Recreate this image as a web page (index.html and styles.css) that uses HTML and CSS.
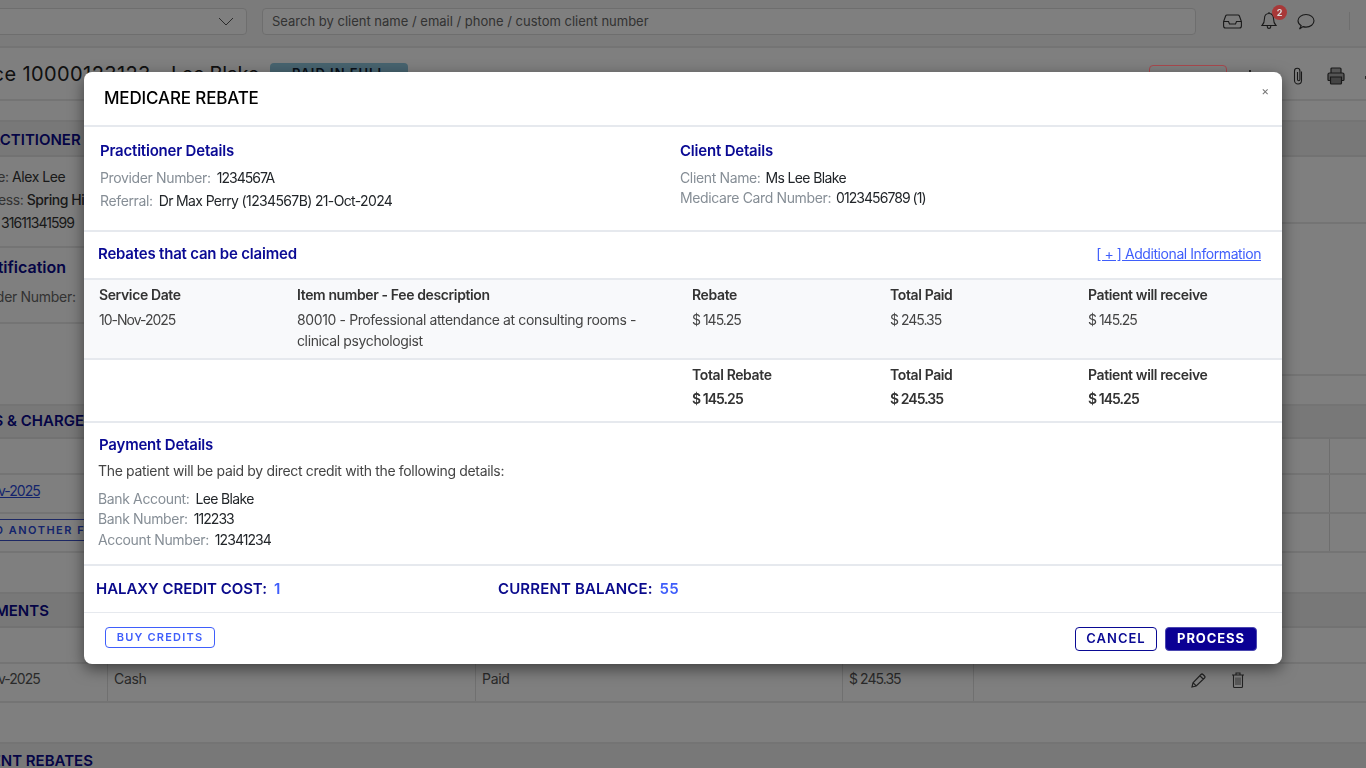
FILE: index.html
```html
<!DOCTYPE html>
<html lang="en">
<head>
<meta charset="utf-8">
<title>Medicare Rebate</title>
<link rel="stylesheet" href="styles.css">
</head>
<body>
<div class="page">
  <header class="topbar">
    <div class="select"><svg class="chev" width="16" height="9" viewBox="0 0 16 9"><path d="M1 1l7 7 7-7" fill="none" stroke="#555" stroke-width="1"/></svg></div>
    <div class="search">Search by client name / email / phone / custom client number</div>
    <div class="top-icons">
      <svg width="19" height="15" viewBox="0 0 19 15"><path d="M4 1h11q1 0 1.400 1l2 5.500V12q0 2-2 2H2.600q-2 0-2-2V7.500l2-5.500Q3 1 4 1zM.8 7.500h4.700l1 2.500h6l1-2.500h4.700" fill="none" stroke="#333" stroke-width="1.100"/></svg>
      <span class="bell"><svg width="16" height="20" viewBox="0 0 16 20"><path d="M8 1v1.500M8 2.500c-3 0-4.500 2-4.500 5 0 3.500-1 5.500-2.500 7h14c-1.500-1.500-2.500-3.500-2.500-7 0-3-1.500-5-4.500-5zM6.300 14.500v1.200a1.700 1.700 0 0 0 3.400 0v-1.200" fill="none" stroke="#333" stroke-width="1.100"/></svg><b class="count">2</b></span>
      <svg width="18" height="17" viewBox="0 0 18 17"><path d="M2.500 16l1.700-3.300C2.300 11.500 1 9.800 1 7.800 1 4.300 4.500 1.500 9 1.500s8 2.800 8 6.300-3.500 6.300-8 6.300c-1 0-2-.2-3-.5z" fill="none" stroke="#333" stroke-width="1.100"/></svg>
      <i class="divider"></i>
    </div>
  </header>
  <section class="title-row">
    <h1>Invoice 10000123123 <span class="who">- Lee Blake</span></h1>
    <span class="paid">PAID IN FULL</span>
    <span class="grow"></span>
    <span class="refund"></span>
    <i class="tick"></i>
    <svg class="clip" width="10" height="18" viewBox="0 0 10 18"><path d="M8.500 4.500v9a3.500 3.500 0 0 1-7 0V4a2.700 2.700 0 0 1 5.400 0v8.500a1.200 1.200 0 0 1-2.400 0V5" fill="none" stroke="#333" stroke-width="1.100"/></svg>
    <svg class="printer" width="18" height="18" viewBox="0 0 18 18"><path d="M4 6V2q0-1 1-1h8q1 0 1 1v4M3.500 13.500H2q-1 0-1-1V7.500Q1 6 2.500 6h13Q17 6 17 7.500v5q0 1-1 1h-1.500" fill="#aaa" stroke="#333" stroke-width="1.200"/><path d="M3.500 10h11v6q0 1-1 1h-9q-1 0-1-1z" fill="#888" stroke="#333" stroke-width="1.200"/></svg>
    <i class="tick edge"></i>
  </section>
  <div class="strip"></div>
  <h2 class="band band-prac">PRACTITIONER DETAILS</h2>
  <div class="two">
    <div class="two-left">
      <section class="prac">
        <p><span class="dim">Name:</span> Alex Lee</p>
        <p><span class="dim">Address:</span> <b class="m">Spring Hill</b></p>
        <p class="abn"><span class="dim">ABN:</span> <span class="num">31611341599</span></p>
      </section>
      <section class="cert">
        <h3>Identification</h3>
        <p class="dim">Provider Number:</p>
      </section>
      <div class="fill"></div>
    </div>
    <div class="two-right">
      <div class="r1"></div>
      <div class="r2"></div>
      <div class="fill"></div>
    </div>
  </div>
  <h2 class="band band-svc">SERVICES &amp; CHARGES</h2>
  <div class="trow thead"><span></span><span></span></div>
  <div class="trow tall"><a class="num" href="#">10-Nov-2025</a><span></span></div>
  <div class="add-row"><span class="add">ADD ANOTHER FEE</span><span></span></div>
  <div class="gap"></div>
  <h2 class="band band-pay">PAYMENTS</h2>
  <div class="pay-head"></div>
  <div class="pay-row">
    <span class="num">10-Nov-2025</span><span>Cash</span><span>Paid</span><span class="num">$ 245.35</span>
    <span class="acts">
      <svg width="15" height="15" viewBox="0 0 15 15"><path d="M1 14l1-4.200L10 1.500q1-1 2 0l1.500 1.500q1 1 0 2L5.200 13zM2.200 9.800l3 3M9 2.800l3.200 3.200" fill="none" stroke="#444" stroke-width="1.200"/></svg>
      <svg width="14" height="16" viewBox="0 0 14 16"><path d="M1 3h12M5 3V1h4v2M2.500 3v11.500q0 1 1 1h7q1 0 1-1V3" fill="none" stroke="#444" stroke-width="1.100"/><path d="M5 5.500v7.500M7 5.500v7.500M9 5.500v7.500" fill="none" stroke="#666" stroke-width="1"/></svg>
    </span>
  </div>
  <div class="gap"></div>
  <h2 class="band band-reb">CLIENT REBATES</h2>
</div>

<div class="backdrop"></div>

<div class="modal">
  <div class="m-head">
    <h4>MEDICARE REBATE</h4>
    <span class="close">×</span>
  </div>
  <div class="m-details">
    <div class="col col-left">
      <h5>Practitioner Details</h5>
      <p><span class="lbl">Provider Number:</span><span class="val num">1234567A</span></p>
      <p class="referral"><span class="lbl">Referral:</span><span class="val">Dr Max Perry (1234567B) 21-Oct-2024</span></p>
    </div>
    <div class="col col-right">
      <h5>Client Details</h5>
      <p><span class="lbl">Client Name:</span><span class="val">Ms Lee Blake</span></p>
      <p><span class="lbl">Medicare Card Number:</span><span class="val num">0123456789 (1)</span></p>
    </div>
  </div>
  <div class="m-claim">
    <h5>Rebates that can be claimed</h5>
    <a href="#">[ + ] Additional Information</a>
  </div>
  <div class="m-table shade">
    <div class="cell first"><strong>Service Date</strong><span class="num">10-Nov-2025</span></div>
    <div class="cell first"><strong>Item number - Fee description</strong><span>80010 - Professional attendance at consulting rooms - clinical psychologist</span></div>
    <div class="cell"><strong>Rebate</strong><span class="num">$ 145.25</span></div>
    <div class="cell"><strong>Total Paid</strong><span class="num">$ 245.35</span></div>
    <div class="cell"><strong>Patient will receive</strong><span class="num">$ 145.25</span></div>
  </div>
  <div class="m-table totals">
    <div class="cell"></div>
    <div class="cell"></div>
    <div class="cell"><strong>Total Rebate</strong><strong class="v">$ 145.25</strong></div>
    <div class="cell"><strong>Total Paid</strong><strong class="v">$ 245.35</strong></div>
    <div class="cell"><strong>Patient will receive</strong><strong class="v">$ 145.25</strong></div>
  </div>
  <div class="m-pay">
    <h5>Payment Details</h5>
    <p class="intro">The patient will be paid by direct credit with the following details:</p>
    <p><span class="lbl">Bank Account:</span><span class="val">Lee Blake</span></p>
    <p><span class="lbl">Bank Number:</span><span class="val num">112233</span></p>
    <p><span class="lbl">Account Number:</span><span class="val num">12341234</span></p>
  </div>
  <div class="m-credit">
    <div class="credit c1">HALAXY CREDIT COST:<em>1</em></div>
    <div class="credit">CURRENT BALANCE:<em>55</em></div>
  </div>
  <div class="m-foot">
    <span class="btn buy">BUY CREDITS</span>
    <span class="grow"></span>
    <span class="btn cancel">CANCEL</span>
    <span class="btn process">PROCESS</span>
  </div>
</div>
</body>
</html>
```
FILE: styles.css
```css
*{box-sizing:border-box}
html,body{margin:0;height:100%;overflow:hidden}
body{background:#fff;font-family:Inter,"Liberation Sans",sans-serif;font-size:14px;color:#212529;letter-spacing:-.3px}
h1,h2,h3,h4,h5,p{margin:0}
.grow{flex:1}
.num{letter-spacing:-.95px}
.page{margin-left:-100px;width:1466px;height:768px;overflow:hidden;background:#fff}
.topbar{height:48px;background:#f6f6f6;border-bottom:2px solid #e8e8e8;display:flex;align-items:center;padding-bottom:4px}
.select{width:347px;height:27px;border:1px solid #ddd;border-radius:4px;background:#fff;display:flex;align-items:center;justify-content:flex-end;padding-right:12px}
.search{width:934px;height:27px;margin-left:15px;border:1px solid #ddd;border-radius:4px;background:#fff;color:#666;font-size:13px;line-height:24px;padding-left:9px;letter-spacing:0}
.top-icons{display:flex;align-items:center;margin-left:27px}
.bell{position:relative;display:flex;margin-left:19px;margin-top:-1px}
.bell+svg{margin-left:20px}
.count{position:absolute;z-index:1;left:11px;top:-6px;width:15px;height:15px;border-radius:50%;background:#a83838;color:#ddd;font-size:9px;line-height:15px;text-align:center;letter-spacing:0}
.divider{display:block;width:1px;height:18px;background:#ddd;margin-left:34px}
.title-row{height:53px;display:flex;align-items:flex-start;padding-left:46px;border-bottom:2px solid #e8e8e8;padding-right:0}
.title-row h1{font-size:20px;line-height:24px;margin-top:14px;font-weight:400;color:#222;white-space:nowrap;letter-spacing:.4px}
.who{letter-spacing:-.4px}
.paid{margin:15px 0 0 11px;width:138px;height:28px;background:#8fc6de;border-radius:4px;color:#123;font-size:13px;font-weight:600;text-align:center;line-height:21px;letter-spacing:1px}
.refund{position:relative;z-index:1;width:78px;height:30px;margin-top:17px;border:1px solid #a8484e;border-radius:4px;margin-right:22px}
.tick{display:block;width:2px;height:3px;background:#555;margin:22px 42px 0 0}
.tick.edge{width:1px;margin:28px 0 0 20px}
.clip{margin:19px 24px 0 0}
.printer{margin-top:19px}
.strip{height:21px;background:#fff;border-bottom:2px solid #e8e8e8}
.band{height:35px;background:#f1f1f1;color:#0a0a8c;font-size:15px;font-weight:600;line-height:35px;white-space:nowrap;border-bottom:2px solid #e4e4e4;letter-spacing:0}
.band-prac{padding-left:70px}
.band-svc{padding-left:30px;border-top:2px solid #e8e8e8;line-height:29px}
.band-pay{padding-left:66px;height:34px;line-height:33px}
.band-reb{padding-left:68px;height:35px;line-height:33px}
.two{height:247px;display:flex}
.two-left{width:700px;display:flex;flex-direction:column}
.two-right{flex:1;display:flex;flex-direction:column}
.fill{flex:1}
.r1{height:67px;border-bottom:2px solid #e8e8e8}
.r2{height:152px;border-bottom:2px solid #e8e8e8}
.prac{height:91px;padding:8px 0 0 68px;border-bottom:2px solid #e8e8e8;line-height:23px;white-space:nowrap;color:#333;letter-spacing:-.45px}
.prac .m{font-weight:500}
.abn{margin-left:-2px}
.dim{color:#666}
.cert{height:76px;padding:5px 0 0 64px;border-bottom:2px solid #e8e8e8;white-space:nowrap}
.cert h3{font-size:16px;font-weight:600;color:#0a0a8c;line-height:28px;letter-spacing:0}
.cert p{margin-top:7px}
.trow{display:grid;grid-template-columns:1fr 37px;border-bottom:2px solid #e8e8e8;align-items:center;padding-left:63px}
.thead{height:36px}
.tall{height:39px}
.trow a{color:#2a49d8;margin-bottom:6px}
.trow span:last-child,.add-row span:last-child{border-left:1px solid #ddd;height:100%}
.add-row{height:39px;display:grid;grid-template-columns:1fr 37px;border-bottom:2px solid #e8e8e8}
.add{justify-self:start;height:22px;margin:5px 0 0 63px;border:1px solid #3a50c8;border-radius:4px;color:#2a49d8;font-size:11px;font-weight:600;letter-spacing:1.500px;line-height:20px;padding:0 12px;white-space:nowrap}
.gap{height:41px;border-bottom:2px solid #e8e8e8}
.pay-head{height:36px;border-bottom:2px solid #e8e8e8}
.pay-row{height:39px;display:grid;grid-template-columns:207px 368px 367px 131px 1fr;border-bottom:2px solid #e8e8e8;line-height:30px;color:#555}
.pay-row span{padding-left:6px;border-left:1px solid #e0e0e0}
.pay-row span:first-child{padding-left:63px;border-left:0}
.acts{display:flex;align-items:center;gap:25px;padding-left:217px!important;padding-bottom:5px}

.backdrop{position:fixed;inset:0;background:rgba(0,0,0,.5)}
.modal{position:fixed;z-index:2;left:84px;top:72px;width:1198px;height:592px;background:#fff;border-radius:8px;box-shadow:0 5px 15px rgba(0,0,0,.5);overflow:hidden;display:flex;flex-direction:column}
.modal h5{font-size:15px;font-weight:600;color:#0a0a94;line-height:20px;letter-spacing:-.2px}
.modal a{color:#3f5efb;letter-spacing:-.43px}
.lbl{color:#868e96;margin-right:5px;letter-spacing:-.36px}
.col-left .lbl,.m-pay .lbl{margin-right:6px}
.val{letter-spacing:-.64px}
.val.num{letter-spacing:-.95px}
.m-head{height:55px;border-bottom:2px solid #e6e9ee;position:relative;padding:16px 0 0 20px}
.m-head h4{font-size:17px;font-weight:500;color:#000;line-height:20px;letter-spacing:-.15px}
.close{position:absolute;right:13px;top:11px;color:#777;font-size:12px;line-height:16px}
.m-details{height:105px;border-bottom:2px solid #e6e9ee;display:flex;padding:14px 0 0 16px}
.col{width:580px}
.col h5{margin-bottom:7px}
.col p{line-height:20px}
.col .referral{margin-top:3px}
.m-claim{height:48px;border-bottom:2px solid #e6e9ee;display:flex;justify-content:space-between;padding:12px 21px 0 14px;line-height:20px}
.m-table{display:grid;grid-template-columns:198px 396px 198px 198px 1fr;padding-left:14px}
.first{margin-left:1px}
.shade{height:80px;background:#f8f9fb;border-bottom:2px solid #e6e9ee}
.totals{height:63px;border-bottom:2px solid #e6e9ee}
.cell{padding-top:5px;display:flex;flex-direction:column}
.cell strong{font-weight:600;font-size:14px;line-height:20px;color:#333;letter-spacing:-.38px}
.cell span{color:#444;line-height:20.500px;margin-top:5px;padding-right:30px;letter-spacing:-.38px}
.cell span.num{letter-spacing:-1px}
.cell .v{margin-top:4px;letter-spacing:-.95px}
.m-pay{height:143px;border-bottom:2px solid #e6e9ee;padding:12px 0 0 15px}
.m-pay p{line-height:20.500px}
.m-pay .intro{color:#444;margin:6px 0 7px -1px;letter-spacing:-.33px}
.m-pay p:not(.intro){margin-left:-1px}
.m-credit{height:47px;border-bottom:1px solid #e6e9ee;display:flex;align-items:center;padding:0 0 2px 12px}
.credit{font-size:15px;font-weight:600;color:#0a0a8c;white-space:nowrap;letter-spacing:.14px}
.c1{width:402px;letter-spacing:-.05px}
.credit em{font-style:normal;color:#3f5efb;margin-left:7px}
.m-foot{flex:1;display:flex;align-items:flex-start;padding:14px 25px 0 21px}
.btn{display:block;border-radius:4px;font-weight:600;text-align:center;white-space:nowrap}
.buy{width:110px;height:21px;border:1px solid #3f5efb;color:#3f5efb;font-size:11px;line-height:19px;letter-spacing:1.200px}
.cancel{width:82px;height:24px;border:1px solid #0a0a94;color:#0a0a94;font-size:13px;line-height:20px;letter-spacing:1px;margin-right:8px;background:#fff}
.process{width:92px;height:24px;background:#0a0094;border:1px solid #4a46b0;color:#fff;font-size:13px;font-weight:700;line-height:20px;letter-spacing:.9px}
```
